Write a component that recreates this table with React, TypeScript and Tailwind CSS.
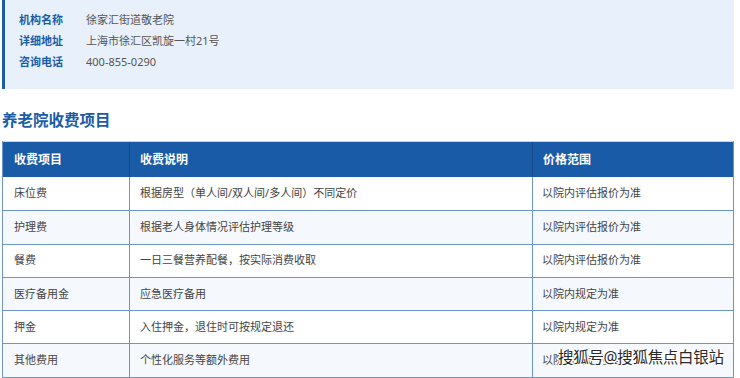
import React from "react";

const rows = [
  ["床位费", "根据房型（单人间/双人间/多人间）不同定价", "以院内评估报价为准"],
  ["护理费", "根据老人身体情况评估护理等级", "以院内评估报价为准"],
  ["餐费", "一日三餐营养配餐，按实际消费收取", "以院内评估报价为准"],
  ["医疗备用金", "应急医疗备用", "以院内规定为准"],
  ["押金", "入住押金，退住时可按规定退还", "以院内规定为准"],
  ["其他费用", "个性化服务等额外费用", "以院内规定为准"],
];

const font = { fontFamily: '"Noto Sans", "Noto Sans CJK SC", sans-serif' };

export default function App() {
  return (
    <div className="relative w-[740px] h-[378px] bg-white overflow-hidden" style={font}>
      <div className="ml-[2px] w-[732px] h-[89px] bg-[#e8f1fb] border-l-[3px] border-[#1a5ca8] pl-[14px] pt-[10px] flex flex-col">
        {[
          ["机构名称", "徐家汇街道敬老院"],
          ["详细地址", "上海市徐汇区凯旋一村21号"],
          ["咨询电话", "400-855-0290"],
        ].map(([k, v]) => (
          <div key={k} className="flex items-center h-[21px] text-[11px]">
            <span className="w-[67px] font-bold text-[#1a5ca8]">{k}</span>
            <span className="text-[#555]">{v}</span>
          </div>
        ))}
      </div>
      <div className="ml-[2px] mt-[21px] h-[22px] flex items-center text-[15.5px] font-bold text-[#1a5ca8] leading-none">
        养老院收费项目
      </div>
      <div className="ml-[2px] mt-[9px] w-[732px] border-x border-b border-[#6b96cc]">
        <div className="grid grid-cols-[127px_403px_1fr] h-[36px] bg-[#1a5ba8] text-white text-[12px] font-bold border-t border-[#c9d6e6]">
          <div className="flex items-center pl-[11px] border-r border-[#134a8c]">收费项目</div>
          <div className="flex items-center pl-[10px] border-r border-[#134a8c]">收费说明</div>
          <div className="flex items-center pl-[10px]">价格范围</div>
        </div>
        {rows.map((r, i) => (
          <div
            key={i}
            className={`grid grid-cols-[127px_403px_1fr] h-[33.3px] text-[11px] text-[#444] ${
              i > 0 ? "border-t border-[#6b96cc]" : ""
            } ${i % 2 === 1 ? "bg-[#f5f9fd]" : "bg-white"}`}
          >
            <div className="flex items-center pl-[11px] border-r border-[#6b96cc]">{r[0]}</div>
            <div className="flex items-center pl-[10px] border-r border-[#6b96cc]">{r[1]}</div>
            <div className="flex items-center pl-[9px]">{r[2]}</div>
          </div>
        ))}
      </div>
      <div
        className="absolute left-[558px] top-[350px] text-[15.5px] text-[#2a2a2a] leading-none tracking-[-0.3px]"
        style={{
          textShadow:
            "1px 0 0 #fff, -1px 0 0 #fff, 0 1px 0 #fff, 0 -1px 0 #fff, 1px 1px 0 #fff, -1px -1px 0 #fff, 1px -1px 0 #fff, -1px 1px 0 #fff",
        }}
      >
        搜狐号@搜狐焦点白银站
      </div>
    </div>
  );
}
